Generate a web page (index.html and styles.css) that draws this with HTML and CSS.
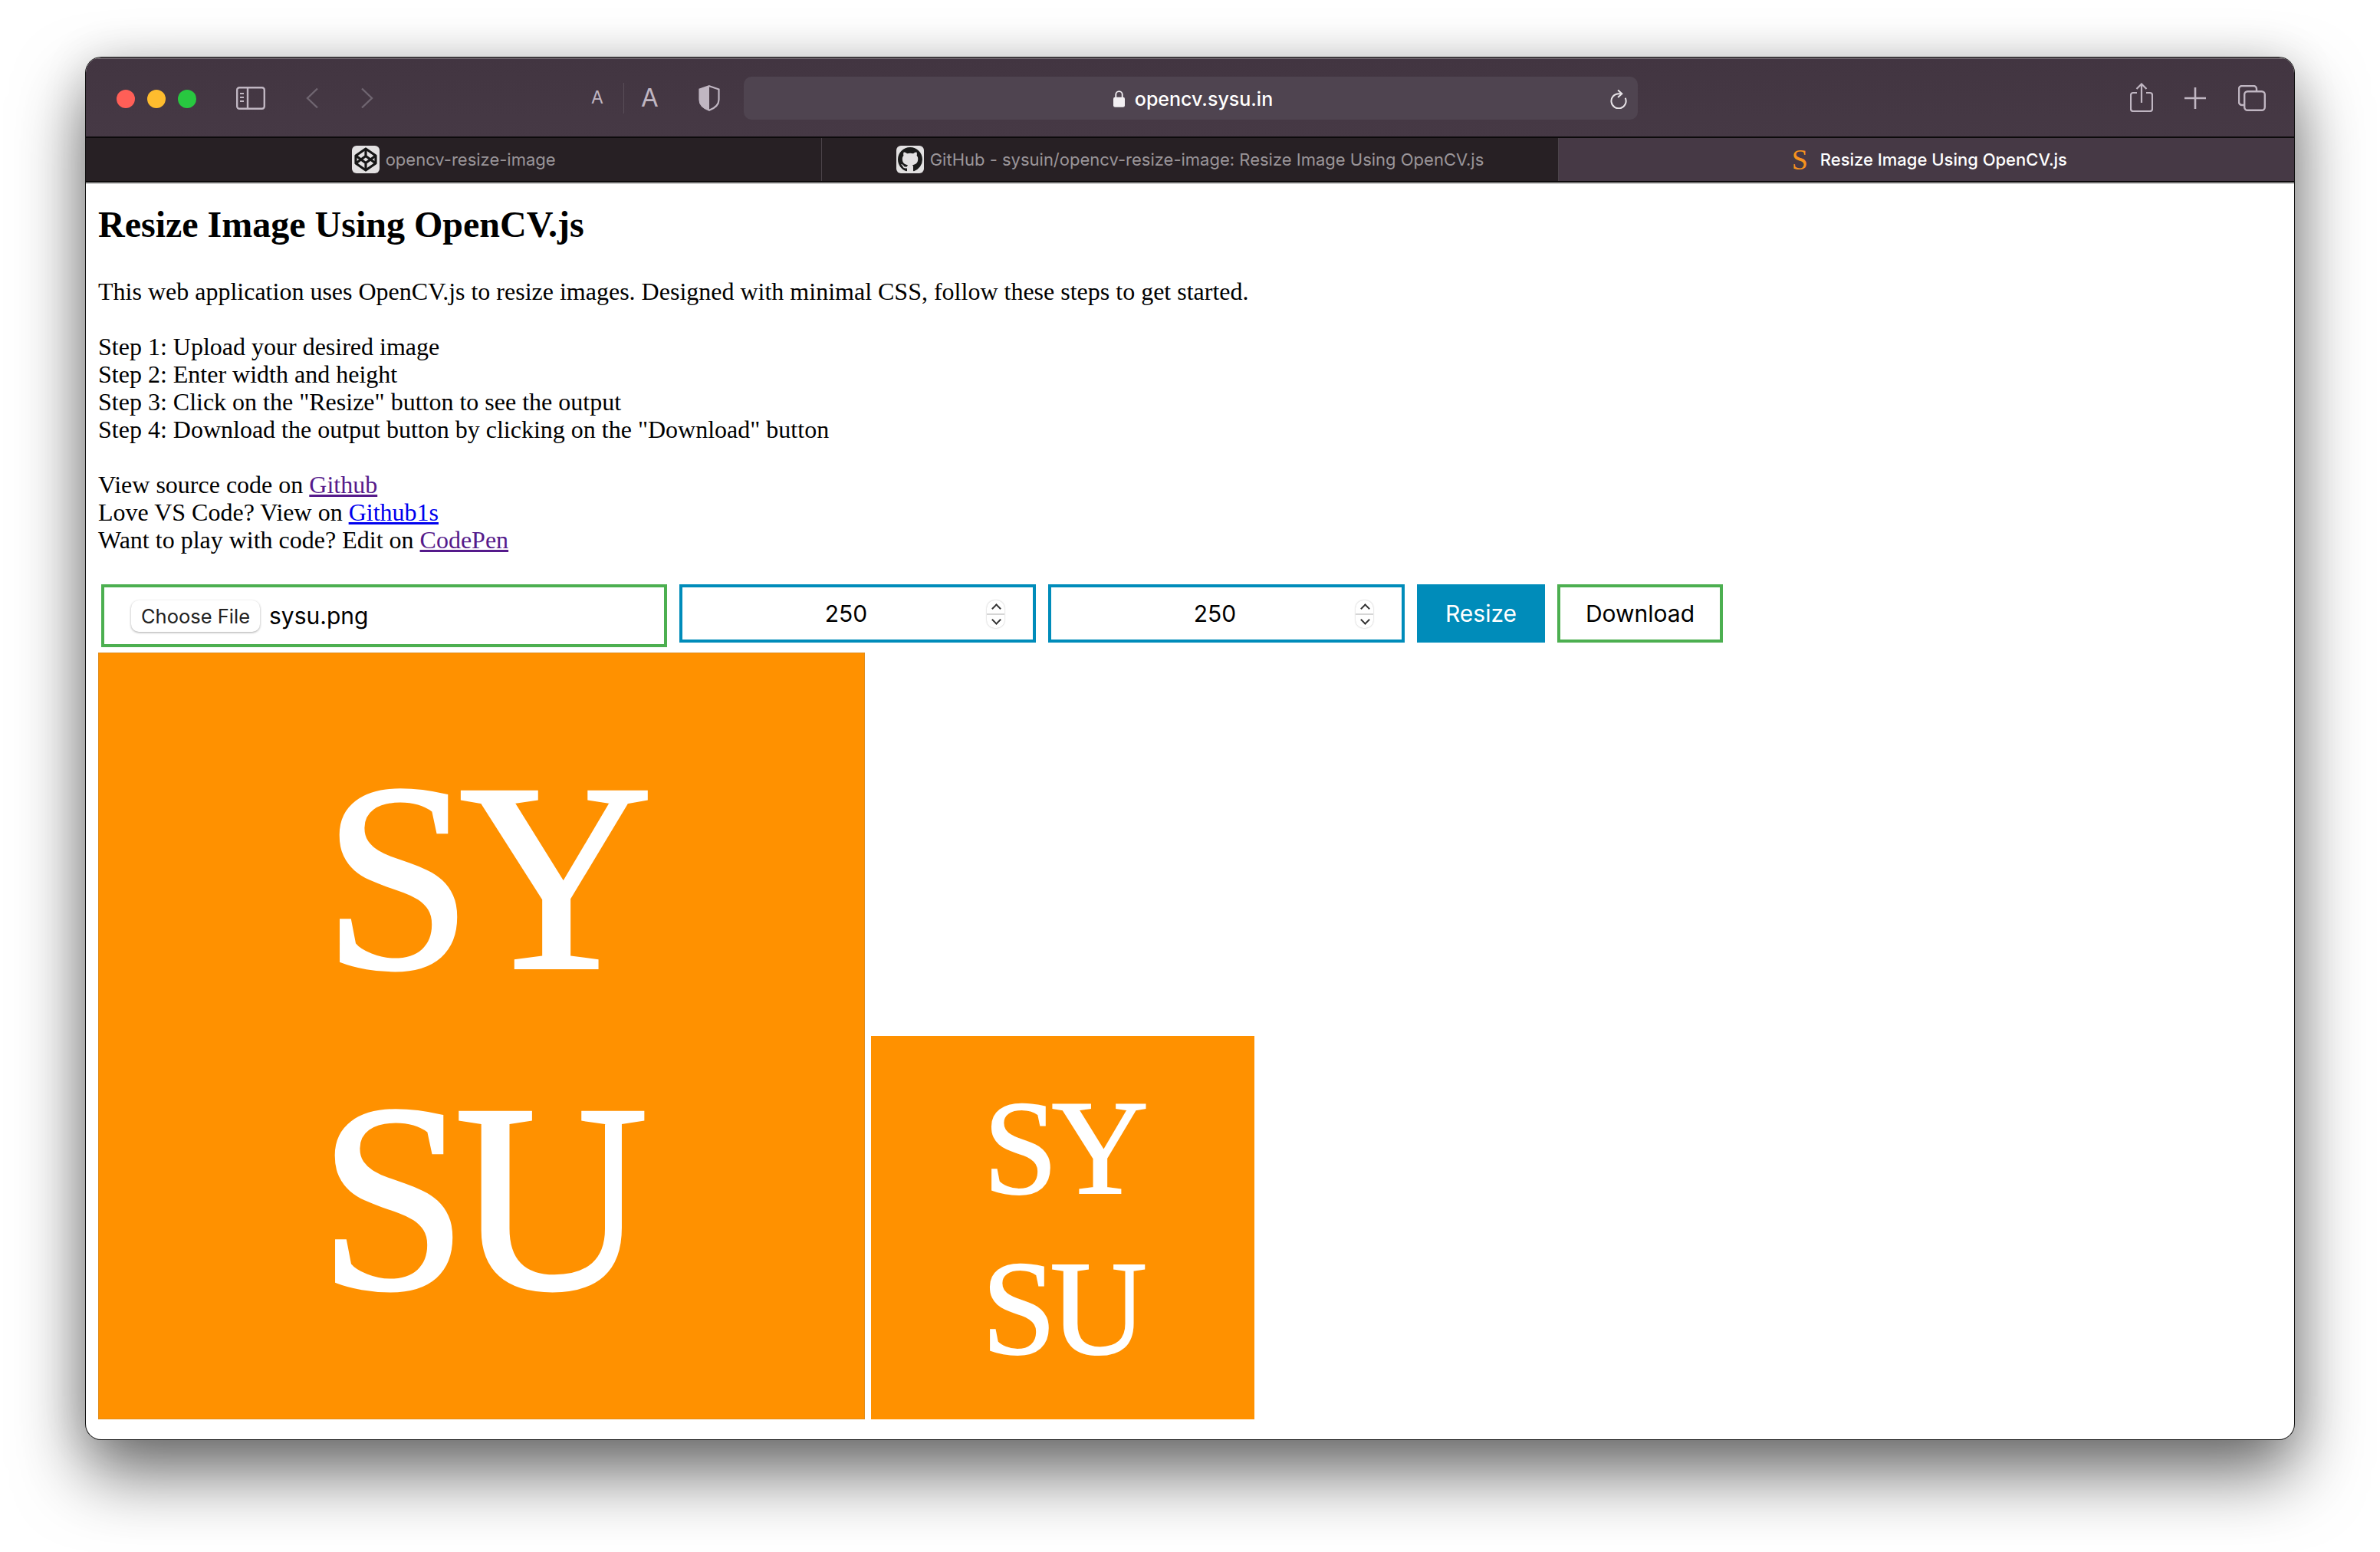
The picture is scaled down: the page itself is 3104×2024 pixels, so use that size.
FILE: index.html
```html
<!DOCTYPE html>
<html lang="en">
<head>
<meta charset="utf-8">
<title>Resize Image Using OpenCV.js</title>
<link rel="stylesheet" href="styles.css">
</head>
<body>
<div class="window">
  <header class="toolbar">
    <div class="lights">
      <span class="light red"></span><span class="light amber"></span><span class="light green"></span>
    </div>
    <svg class="ic-side" viewBox="0 0 38 30" fill="none" stroke="#c0b6c2" stroke-width="2.4"><rect x="1.2" y="1.2" width="35.6" height="27.6" rx="3"/><path d="M15 1v28"/><path d="M5 9h5M5 14h5M5 19h5" stroke-width="2"/></svg>
    <svg class="ic-back" viewBox="0 0 18 28" fill="none" stroke="#6f6570" stroke-width="2.4"><path d="M16 1.5 3 14l13 12.5"/></svg>
    <svg class="ic-fwd" viewBox="0 0 18 28" fill="none" stroke="#6f6570" stroke-width="2.4"><path d="M2 1.5 15 14 2 26.5"/></svg>
    <span class="a-small">A</span>
    <span class="a-div"></span>
    <span class="a-big">A</span>
    <svg class="ic-shield" viewBox="0 0 28 34" fill="none"><path d="M14 1.2 26.5 5.5V19C26.5 26 20 30.5 14 32.8 8 30.5 1.5 26 1.5 19V5.5Z" stroke="#c0b6c2" stroke-width="2.2"/><path d="M14 1.2 1.5 5.5V19C1.5 26 8 30.5 14 32.8Z" fill="#c0b6c2"/></svg>
    <div class="urlbar">
      <div class="url">
        <svg class="ic-lock" viewBox="0 0 16 24"><path d="M3.5 11V6.5a4.5 4.5 0 0 1 9 0V11" fill="none" stroke="#f2eff2" stroke-width="2"/><rect y="10" width="16" height="14" rx="2.5" fill="#f2eff2"/></svg>
        <span>opencv.sysu.in</span>
      </div>
      <svg class="ic-reload" viewBox="0 0 24 28" fill="none" stroke="#e6e2e6" stroke-width="2.1"><path d="M20.6 13.2A10 10 0 1 1 11.5 7.4H16"/><path d="M10.5 2.5 16 7.5l-5.5 5"/></svg>
    </div>
    <svg class="ic-share" viewBox="0 0 30 38" fill="none" stroke="#c0b6c2" stroke-width="2.2"><path d="M9 13H4a3 3 0 0 0-3 3v18a3 3 0 0 0 3 3h22a3 3 0 0 0 3-3V16a3 3 0 0 0-3-3h-5"/><path d="M15 26V2M8.5 8 15 1.5 21.5 8"/></svg>
    <svg class="ic-plus" viewBox="0 0 28 28" fill="none" stroke="#c0b6c2" stroke-width="2.6"><path d="M14 0v28M0 14h28"/></svg>
    <svg class="ic-tabs" viewBox="0 0 36 34" fill="none" stroke="#c0b6c2" stroke-width="2.4"><path d="M7 26H5a4 4 0 0 1-4-4V5a4 4 0 0 1 4-4h15a4 4 0 0 1 4 4v2"/><rect x="8.2" y="8.2" width="26.6" height="24.6" rx="4"/></svg>
  </header>
  <nav class="tabs">
    <div class="tab">
      <svg class="favicon" viewBox="0 0 36 36"><rect width="36" height="36" rx="6" fill="#e3e1e2"/><g fill="none" stroke="#161616" stroke-width="3.2" stroke-linejoin="round"><path d="M18 4 31 13V23L18 32 5 23V13Z"/><path d="M18 4V13.5M18 22.5V32M5 13 18 22.5 31 13M5 23 18 13.5 31 23"/></g></svg>
      <span>opencv-resize-image</span>
    </div>
    <div class="tab">
      <svg class="favicon" viewBox="0 0 36 36"><rect width="36" height="36" rx="6" fill="#e3e1e2"/><g transform="translate(2 2)"><path fill="#1b1b1b" d="M16 0C7.16 0 0 7.16 0 16c0 7.08 4.58 13.06 10.94 15.18.8.14 1.1-.34 1.1-.76 0-.38-.02-1.64-.02-2.98-4.02.74-5.06-.98-5.38-1.88-.18-.46-.96-1.88-1.64-2.26-.56-.3-1.36-1.04-.02-1.06 1.26-.02 2.16 1.16 2.46 1.64 1.44 2.42 3.74 1.74 4.66 1.32.14-1.04.56-1.74 1.02-2.14-3.56-.4-7.28-1.78-7.28-7.9 0-1.74.62-3.18 1.64-4.3-.16-.4-.72-2.04.16-4.24 0 0 1.34-.42 4.4 1.64 1.28-.36 2.64-.54 4-.54 1.36 0 2.72.18 4 .54 3.06-2.08 4.4-1.64 4.4-1.64.88 2.2.32 3.84.16 4.24 1.02 1.12 1.64 2.54 1.64 4.3 0 6.14-3.74 7.5-7.3 7.9.58.5 1.08 1.46 1.08 2.96 0 2.14-.02 3.86-.02 4.4 0 .42.3.92 1.1.76A16.03 16.03 0 0 0 32 16C32 7.16 24.84 0 16 0Z"/></g></svg>
      <span>GitHub - sysuin/opencv-resize-image: Resize Image Using OpenCV.js</span>
    </div>
    <div class="tab active">
      <span class="fav-s">S</span>
      <span>Resize Image Using OpenCV.js</span>
    </div>
  </nav>
  <main class="page">
    <h2 class="title">Resize Image Using OpenCV.js</h2>
    <p class="para">This web application uses OpenCV.js to resize images. Designed with minimal CSS, follow these steps to get started.</p>
    <p class="para">Step 1: Upload your desired image<br>Step 2: Enter width and height<br>Step 3: Click on the "Resize" button to see the output<br>Step 4: Download the output button by clicking on the "Download" button</p>
    <p class="para">View source code on <a class="visited" href="#a">Github</a><br>Love VS Code? View on <a class="fresh" href="#b">Github1s</a><br>Want to play with code? Edit on <a class="visited" href="#c">CodePen</a></p>
    <form class="controls">
      <div class="file">
        <span class="file-btn">Choose File</span>
        <span class="file-name">sysu.png</span>
      </div>
      <div class="num"><span class="num-val">250</span><span class="spin"><i class="up"></i><i class="down"></i></span></div>
      <div class="num"><span class="num-val">250</span><span class="spin"><i class="up"></i><i class="down"></i></span></div>
      <div class="btn btn-blue">Resize</div>
      <div class="btn btn-green">Download</div>
    </form>
    <div class="images">
      <div class="img img-lg"><span>SY</span><span>SU</span></div>
      <div class="img img-sm"><span>SY</span><span>SU</span></div>
    </div>
  </main>
</div>
</body>
</html>
```
FILE: styles.css
```css
* { box-sizing: border-box; }
html, body { margin: 0; background: #fff; }
body { width: 3104px; height: 2024px; padding: 75px 112px 0; overflow: hidden; }

.window {
  width: 2880px; height: 1802px;
  border-radius: 20px;
  overflow: hidden;
  background: #fff;
  box-shadow: 0 0 0 1px #111, 0 44px 90px rgba(0,0,0,.58), 0 0 60px rgba(0,0,0,.12);
  display: flex; flex-direction: column;
}

.toolbar {
  height: 105px; flex: none;
  background: linear-gradient(#423541, #463945);
  border-top: 2px solid #6b6269;
  border-bottom: 2px solid #0d0b0c;
  display: flex; align-items: center;
  padding-left: 40px;
  position: relative;
}
.lights { display: flex; gap: 16px; margin-top: 2px; }
.light { width: 24px; height: 24px; border-radius: 50%; }
.red { background: #ff5f57; }
.amber { background: #febc2e; }
.green { background: #28c840; }
.ic-side { width: 38px; height: 30px; margin-left: 52px; flex: none; }
.ic-back { width: 18px; height: 28px; margin-left: 52px; flex: none; }
.ic-fwd { width: 18px; height: 28px; margin-left: 54px; flex: none; }
.a-small, .a-big { font-family: Inter, sans-serif; color: #c0b6c2; line-height: 1; }
.a-small { font-size: 23px; margin-left: 283px; width: 17px; }
.a-div { width: 1px; height: 40px; background: #594e58; margin-left: 25px; }
.a-big { font-size: 33px; margin-left: 22px; width: 23px; }
.ic-shield { width: 28px; height: 34px; margin-left: 52px; flex: none; }
.urlbar {
  width: 1166px; height: 56px; flex: none;
  margin-left: 31px;
  border-radius: 10px;
  background: #4f4450;
  display: flex; align-items: center; justify-content: center;
  position: relative;
}
.url { display: flex; align-items: center; gap: 13px; color: #fff; font: 500 25px Inter, sans-serif; padding: 2px 0 0 6px; }
.ic-lock { width: 15px; height: 23px; }
.ic-reload { width: 23px; height: 27px; position: absolute; right: 13px; top: 15px; }
.ic-share { width: 30px; height: 38px; margin-left: 642px; flex: none; margin-bottom: 2px; }
.ic-plus { width: 28px; height: 28px; margin-left: 41px; flex: none; }
.ic-tabs { width: 36px; height: 34px; margin-left: 42px; flex: none; }

.tabs {
  height: 58px; flex: none;
  display: flex;
  background: #463945;
  border-bottom: 2px solid #0d0b0c;
  box-shadow: 0 2px 0 #c8c8c8;
  position: relative;
}
.tab {
  flex: 1 1 0; display: flex; align-items: center; justify-content: center; gap: 8px;
  background: #272024;
  color: #9a9599;
  font: 400 22px Inter, sans-serif;
  border-right: 1px solid #4c444a;
  min-width: 0;
  white-space: nowrap;
}
.tab.active { background: #463945; color: #fff; font-weight: 500; gap: 16px; border-right: 0; }
.favicon { width: 36px; height: 36px; flex: none; }
.fav-s { font: 38px "Liberation Serif", serif; color: #f7931e; line-height: 1; margin-left: 8px; }

.page {
  flex: 1; padding: 2px 16px 0;
  font: 32px/36px "Liberation Serif", serif; color: #000;
}
.title { font-size: 48px; line-height: 55px; font-weight: 700; margin: 25px 0 0; }
.para { margin: 0 0 36px; }
.title + .para { margin-top: 42px; }
.visited { color: #551a8b; }
.fresh { color: #00e; }

.controls {
  display: flex; align-items: flex-start; gap: 16px;
  margin: 40px 0 7px 4px; height: 82px;
  font: 30px Inter, sans-serif;
}
.file {
  width: 738px; height: 82px;
  border: 4px solid #4caf50;
  display: flex; align-items: center;
  padding-left: 35px; gap: 12px;
}
.file-btn {
  width: 168px; height: 41px; flex: none;
  border-radius: 10px; background: #fff;
  box-shadow: 0 1px 3px rgba(0,0,0,.35);
  display: flex; align-items: center; justify-content: center;
  font-size: 25.5px; color: #222;
}
.num {
  width: 465px; height: 76px;
  border: 4px solid #008cba;
  display: flex; align-items: center;
  position: relative;
}
.num-val { flex: 1; text-align: center; padding-right: 30px; }
.spin {
  position: absolute; right: 37px; top: 17px;
  width: 23px; height: 36px;
  border-radius: 10px;
  background: #fff;
  box-shadow: 0 0 2px rgba(0,0,0,.3);
  display: flex; flex-direction: column;
}
.spin i { flex: 1; display: block; position: relative; }
.spin i + i { border-top: 2px solid #d5d5d5; }
.spin i::after {
  content: ""; position: absolute; left: 8px; width: 7px; height: 7px;
  border-left: 2px solid #333; border-top: 2px solid #333;
}
.up::after { top: 6px; transform: rotate(45deg); }
.down::after { top: 2px; transform: rotate(225deg); }
.btn { height: 76px; display: flex; align-items: center; justify-content: center; }
.btn-blue { width: 167px; background: #008cba; color: #fff; }
.btn-green { width: 216px; border: 4px solid #4caf50; color: #000; }

.images { display: flex; align-items: flex-end; gap: 8px; }
.img {
  background: #ff9100;
  color: #fff;
  font-family: "Liberation Serif", serif;
  display: flex; flex-direction: column; align-items: center; justify-content: center;
}
.img span { display: block; }
.img-lg {
  width: 1000px; height: 1000px; font-size: 350px; line-height: 418px;
  letter-spacing: -17px; -webkit-text-stroke: 4px #fff;
  border: 1px solid #e08c1a;
  padding-top: 3px;
}
.img-lg span:last-child { padding-right: 12px; }
.img-sm {
  width: 500px; height: 500px; font-size: 175px; line-height: 209px;
  letter-spacing: -8px; -webkit-text-stroke: 2px #fff;
  padding-top: 2px;
}
.img-sm span:last-child { padding-right: 4px; }
```
